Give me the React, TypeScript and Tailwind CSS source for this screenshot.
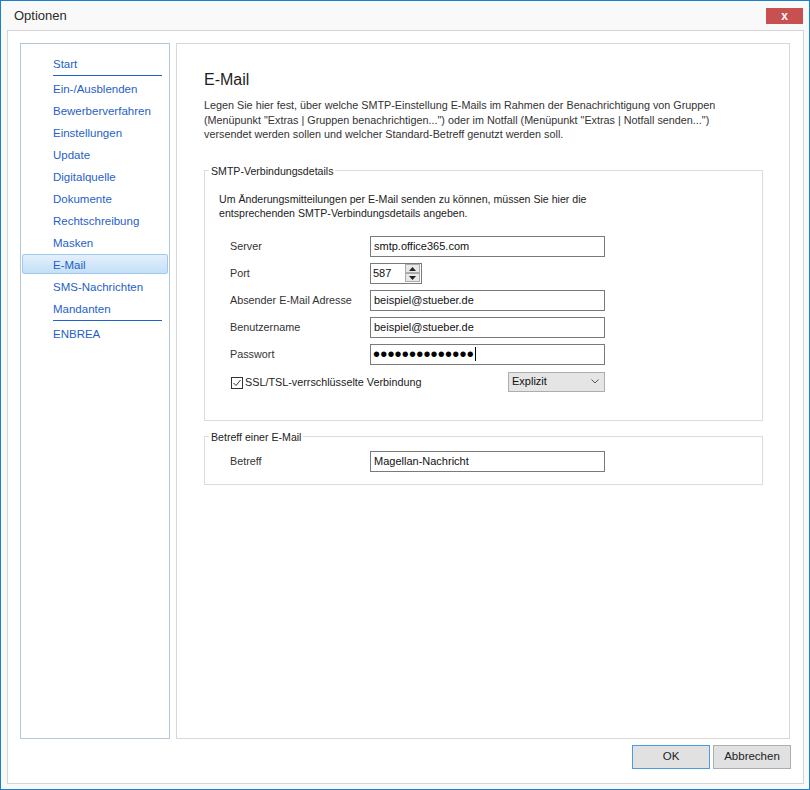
import React from "react";

const navItems = [
  "Ein-/Ausblenden",
  "Bewerberverfahren",
  "Einstellungen",
  "Update",
  "Digitalquelle",
  "Dokumente",
  "Rechtschreibung",
  "Masken",
  "E-Mail",
  "SMS-Nachrichten",
  "Mandanten",
];

function NavLink({ label, active = false }: { label: string; active?: boolean }) {
  if (active) {
    return (
      <div className="h-[22px]">
        <div className="mx-[1px] h-[20px] rounded-[2px] border border-[#9fcaf0] bg-gradient-to-b from-[#e3f0fc] to-[#c4e0f8] pl-[30px] text-[11.5px] leading-[20px] text-[#1f5fc7]">
          {label}
        </div>
      </div>
    );
  }
  return (
    <div className="h-[22px] pl-[32px] text-[11.5px] leading-[22px] text-[#1f5fc7]">{label}</div>
  );
}

function NavRule() {
  return <div className="ml-[32px] mb-[2px] h-px w-[109px] bg-[#1f64c8]" />;
}

function FormRow({ label, children }: { label: string; children: React.ReactNode }) {
  return (
    <div className="flex h-[21px] items-center pl-[25px]">
      <span className="w-[140px] text-[10.8px] text-[#333]">{label}</span>
      {children}
    </div>
  );
}

function TextBox({ value }: { value: string }) {
  return (
    <div className="h-[21px] w-[235px] border border-[#7a7a7a] bg-white pl-[3px] text-[11px] leading-[19px] text-[#111]">
      {value}
    </div>
  );
}

function SpinButton({ up }: { up?: boolean }) {
  return (
    <div className="flex h-[9px] w-[15px] items-center justify-center border border-[#acacac] bg-[#e8e8e8]">
      <svg width="7" height="4" viewBox="0 0 7 4">
        {up ? <path d="M0 4 L3.5 0 L7 4 Z" fill="#222" /> : <path d="M0 0 L7 0 L3.5 4 Z" fill="#222" />}
      </svg>
    </div>
  );
}

export default function App() {
  return (
    <div className="h-[790px] w-[810px] bg-white font-['Liberation_Sans',Arial,sans-serif]">
      <div className="flex h-[790px] w-[810px] flex-col border border-[#1a7fd0] bg-[#f9f9f9]">
        {/* title bar */}
        <div className="flex h-[29px] shrink-0 items-start justify-between">
          <span className="pl-[13px] pt-[7px] text-[13px] leading-[16px] text-[#2b2b2b]">Optionen</span>
          <div className="mr-[6px] mt-[7px] flex h-[16px] w-[37px] items-center justify-center bg-[#c75050] text-[12px] font-bold leading-none text-white">
            x
          </div>
        </div>

        {/* dialog body */}
        <div className="ml-[6px] flex h-[754px] w-[797px] flex-col border border-[#d4d4d4] bg-white pl-[12px] pr-[12px] pt-[12px]">
          <div className="flex h-[696px] gap-[6px]">
            {/* navigation */}
            <div className="h-[696px] w-[150px] border border-[#b5c6d4] pt-[9px]">
              <NavLink label="Start" />
              <NavRule />
              {navItems.map((item) => (
                <NavLink key={item} label={item} active={item === "E-Mail"} />
              ))}
              <NavRule />
              <NavLink label="ENBREA" />
            </div>

            {/* page */}
            <div className="h-[696px] w-[614px] border border-[#d8d8d8] pl-[27px] pt-[26px]">
              <h1 className="text-[16px] leading-[20px] text-[#1e1e1e]">E-Mail</h1>
              <p className="mt-[8px] text-[10.8px] leading-[14.5px] text-[#333]">
                Legen Sie hier fest, über welche SMTP-Einstellung E-Mails im Rahmen der Benachrichtigung von Gruppen
                <br />
                (Menüpunkt "Extras | Gruppen benachrichtigen...") oder im Notfall (Menüpunkt "Extras | Notfall senden...")
                <br />
                versendet werden sollen und welcher Standard-Betreff genutzt werden soll.
              </p>

              <fieldset className="mt-[22px] w-[559px] border border-[#dcdcdc] pb-[28px]">
                <legend className="ml-[4px] px-[2px] text-[10.6px] leading-[14px] text-[#222]">SMTP-Verbindungsdetails</legend>
                <p className="mt-[14px] pl-[14px] text-[10.6px] leading-[14px] text-[#222]">
                  Um Änderungsmitteilungen per E-Mail senden zu können, müssen Sie hier die
                  <br />
                  entsprechenden SMTP-Verbindungsdetails angeben.
                </p>
                <div className="mt-[16px] flex flex-col gap-[6px]">
                  <FormRow label="Server">
                    <TextBox value="smtp.office365.com" />
                  </FormRow>
                  <FormRow label="Port">
                    <div className="flex h-[21px] w-[52px] items-center justify-between border border-[#7a7a7a] bg-white pl-[2px] pr-[1px]">
                      <span className="text-[11px] leading-[19px] text-[#111]">587</span>
                      <div className="flex flex-col">
                        <SpinButton up />
                        <SpinButton />
                      </div>
                    </div>
                  </FormRow>
                  <FormRow label="Absender E-Mail Adresse">
                    <TextBox value="beispiel@stueber.de" />
                  </FormRow>
                  <FormRow label="Benutzername">
                    <TextBox value="beispiel@stueber.de" />
                  </FormRow>
                  <FormRow label="Passwort">
                    <div className="flex h-[21px] w-[235px] items-center border border-[#7a7a7a] bg-white pl-[2px]">
                      <span className="text-[20px] leading-none tracking-[0.2px] text-black">••••••••••••••</span>
                      <span className="ml-[1px] h-[14px] w-px bg-black" />
                    </div>
                  </FormRow>
                </div>
                <div className="mt-[7px] flex h-[20px] items-center pl-[26px]">
                  <div className="flex w-[277px] items-center gap-[2px] pt-[2px]">
                    <div className="flex h-[12px] w-[12px] items-center justify-center border border-[#333] bg-white">
                      <svg width="10" height="10" viewBox="0 0 10 10">
                        <path d="M1.5 5 L4 7.5 L8.5 2" fill="none" stroke="#333" strokeWidth="1" />
                      </svg>
                    </div>
                    <span className="text-[10.8px] text-[#222]">SSL/TSL-verrschlüsselte Verbindung</span>
                  </div>
                  <div className="flex h-[20px] w-[97px] items-center justify-between border border-[#adadad] bg-[#e5e5e5] pl-[3px] pr-[5px]">
                    <span className="text-[11px] text-[#111]">Explizit</span>
                    <svg width="8" height="5" viewBox="0 0 8 5">
                      <path d="M0.5 0.5 L4 4 L7.5 0.5" fill="none" stroke="#555" strokeWidth="1" />
                    </svg>
                  </div>
                </div>
              </fieldset>

              <fieldset className="mt-[9px] w-[559px] border border-[#dcdcdc] pb-[12px]">
                <legend className="ml-[4px] px-[2px] text-[10.6px] leading-[14px] text-[#222]">Betreff einer E-Mail</legend>
                <div className="mt-[7px]">
                  <FormRow label="Betreff">
                    <TextBox value="Magellan-Nachricht" />
                  </FormRow>
                </div>
              </fieldset>
            </div>
          </div>

          {/* dialog buttons */}
          <div className="mt-[6px] flex justify-end gap-[3px]">
            <div className="flex h-[24px] w-[78px] items-center justify-center border border-[#4c9be5] bg-[#e1e1e1] text-[11.5px] text-[#222]">
              OK
            </div>
            <div className="flex h-[24px] w-[78px] items-center justify-center border border-[#adadad] bg-[#e1e1e1] text-[11.5px] text-[#222]">
              Abbrechen
            </div>
          </div>
        </div>
      </div>
    </div>
  );
}
